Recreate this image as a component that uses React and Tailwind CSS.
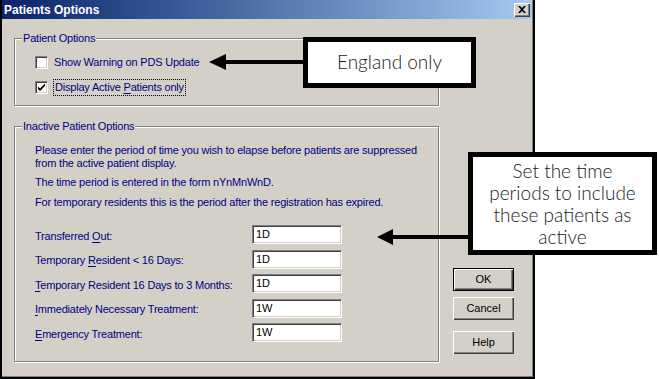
import React from "react";

const dlgFont = { fontFamily: '"Liberation Sans", Arial, sans-serif' };

function Check({ checked }) {
  return (
    <span className="inline-block w-[13px] h-[13px] bg-white border border-t-[#808080] border-l-[#808080] border-b-white border-r-white shadow-[inset_1px_1px_0_#404040,inset_-1px_-1px_0_#D4D0C8] relative shrink-0">
      {checked && (
        <svg width="13" height="13" viewBox="0 0 13 13" className="absolute -left-px -top-px">
          <path d="M3 5.5 L3 8 L5 10 L10 5 L10 2.5 L5 7.5 Z" fill="#000" />
        </svg>
      )}
    </span>
  );
}

function U({ children }) {
  return <span className="underline underline-offset-[2px]">{children}</span>;
}

function Field({ value }) {
  return (
    <div className="w-[90px] h-[19px] bg-white border border-t-[#808080] border-l-[#808080] border-b-white border-r-white shadow-[inset_1px_1px_0_#404040,inset_-1px_-1px_0_#D4D0C8] text-[11px] leading-[15px] text-black pl-[3px] pt-[1px]">
      {value}
    </div>
  );
}

function Btn({ children, def }) {
  return (
    <div
      className={
        "w-[61px] h-[23px] flex items-center justify-center text-[11px] text-black " +
        (def
          ? "border border-black shadow-[inset_1px_1px_0_#fff,inset_-1px_-1px_0_#404040,inset_-2px_-2px_0_#808080]"
          : "shadow-[inset_1px_1px_0_#fff,inset_-1px_-1px_0_#404040,inset_-2px_-2px_0_#808080]")
      }
    >
      {children}
    </div>
  );
}

const rows = [
  [<>Transferred <U>O</U>ut:</>, "1D"],
  [<>Temporary <U>R</U>esident &lt; 16 Days:</>, "1D"],
  [<><U>T</U>emporary Resident 16 Days to 3 Months:</>, "1D"],
  [<><U>I</U>mmediately Necessary Treatment:</>, "1W"],
  [<><U>E</U>mergency Treatment:</>, "1W"],
];

const calloutFont = { fontFamily: '"Lato", "Open Sans", sans-serif' };

export default function App() {
  return (
    <div className="relative w-[659px] h-[379px] bg-white overflow-hidden" style={dlgFont}>
      <div className="w-[535px] h-[379px] bg-[#D4D0C8] border-l-2 border-r-2 border-b-2 border-black flex flex-col">
        <div className="h-[19px] bg-gradient-to-r from-[#0A246A] to-[#A6CAF0] flex items-center justify-between pl-[2px] pr-[2px] border-r border-[#808080]">
          <span className="text-white font-bold text-[12px] leading-none">Patients Options</span>
          <div className="w-[16px] h-[14px] bg-[#D4D0C8] shadow-[inset_1px_1px_0_#fff,inset_-1px_-1px_0_#404040,inset_-2px_-2px_0_#808080] flex items-center justify-center">
            <svg width="8" height="7" viewBox="0 0 8 7">
              <path d="M0 0h2l2 2 2-2h2L5 3.5 8 7H6L4 5 2 7H0l3-3.5z" fill="#000" />
            </svg>
          </div>
        </div>
        <div className="flex-1 flex border-r border-b border-[#808080] text-[#000080] text-[11px] tracking-[-0.2px]">
          <div className="ml-[12px] mt-[13px] w-[426px] flex flex-col">
            <fieldset className="w-[425px] h-[74px] border border-[#808080] shadow-[inset_1px_1px_0_#fff,1px_1px_0_#fff]">
              <legend className="ml-[7px] px-[1px] leading-[13px] bg-[#D4D0C8] relative">Patient Options</legend>
              <div className="pl-[20px]">
                <div className="flex items-center gap-[5px] mt-[9px] h-[17px]">
                  <Check />
                  <span className="px-[1px]">Show Warning on PDS Update</span>
                </div>
                <div className="flex items-center gap-[5px] mt-[8px] h-[17px]">
                  <Check checked />
                  <span className="px-[1px] border border-dotted border-black leading-[15px]">
                    Display Active <U>P</U>atients only
                  </span>
                </div>
              </div>
            </fieldset>
            <fieldset className="mt-[14px] w-[425px] h-[242px] border border-[#808080] shadow-[inset_1px_1px_0_#fff,1px_1px_0_#fff]">
              <legend className="ml-[7px] px-[1px] leading-[13px] bg-[#D4D0C8] relative">Inactive Patient Options</legend>
              <div className="pl-[20px]">
                <div className="mt-[11px] leading-[13px]">
                  <p>
                    Please enter the period of time you wish to elapse before patients are suppressed
                    <br />
                    from the active patient display.
                  </p>
                  <p className="mt-[6px]">The time period is entered in the form nYnMnWnD.</p>
                  <p className="mt-[7px]">For temporary residents this is the period after the registration has expired.</p>
                </div>
                <div className="mt-[16px] flex flex-col gap-[5.5px]">
                  {rows.map(([label, val], i) => (
                    <div key={i} className="flex items-center h-[19px]">
                      <div className="w-[217px] pt-[3px]">{label}</div>
                      <Field value={val} />
                    </div>
                  ))}
                </div>
              </div>
            </fieldset>
          </div>
          <div className="ml-[13px] mt-[249px] flex flex-col tracking-normal">
            <Btn def>OK</Btn>
            <div className="mt-[6px]">
              <Btn>Cancel</Btn>
            </div>
            <div className="mt-[11px]">
              <Btn>Help</Btn>
            </div>
          </div>
        </div>
      </div>

      {/* Callout 1 */}
      <div
        className="absolute left-[303px] top-[37px] w-[173px] h-[51px] border-[5px] border-black bg-white flex items-center justify-center text-[19px] font-light text-[#1a1a1a]"
        style={calloutFont}
      >
        England only
      </div>
      <svg className="absolute left-[205px] top-[52px]" width="100" height="20" viewBox="0 0 100 20">
        <path d="M4 10 L21 2 L21 18 Z" fill="#000" />
        <rect x="20" y="8" width="80" height="4" fill="#000" />
      </svg>

      {/* Callout 2 */}
      <div
        className="absolute left-[468px] top-[152px] w-[189px] h-[103px] border-[5px] border-black bg-white flex items-center justify-center text-center text-[19px] leading-[22px] font-light text-[#1a1a1a]"
        style={calloutFont}
      >
        <div>
          Set the time
          <br />
          periods to include
          <br />
          these patients as
          <br />
          active
        </div>
      </div>
      <svg className="absolute left-[373px] top-[227px]" width="100" height="20" viewBox="0 0 100 20">
        <path d="M4 10 L20 2 L20 18 Z" fill="#000" />
        <rect x="19" y="8" width="80" height="4" fill="#000" />
      </svg>
    </div>
  );
}
